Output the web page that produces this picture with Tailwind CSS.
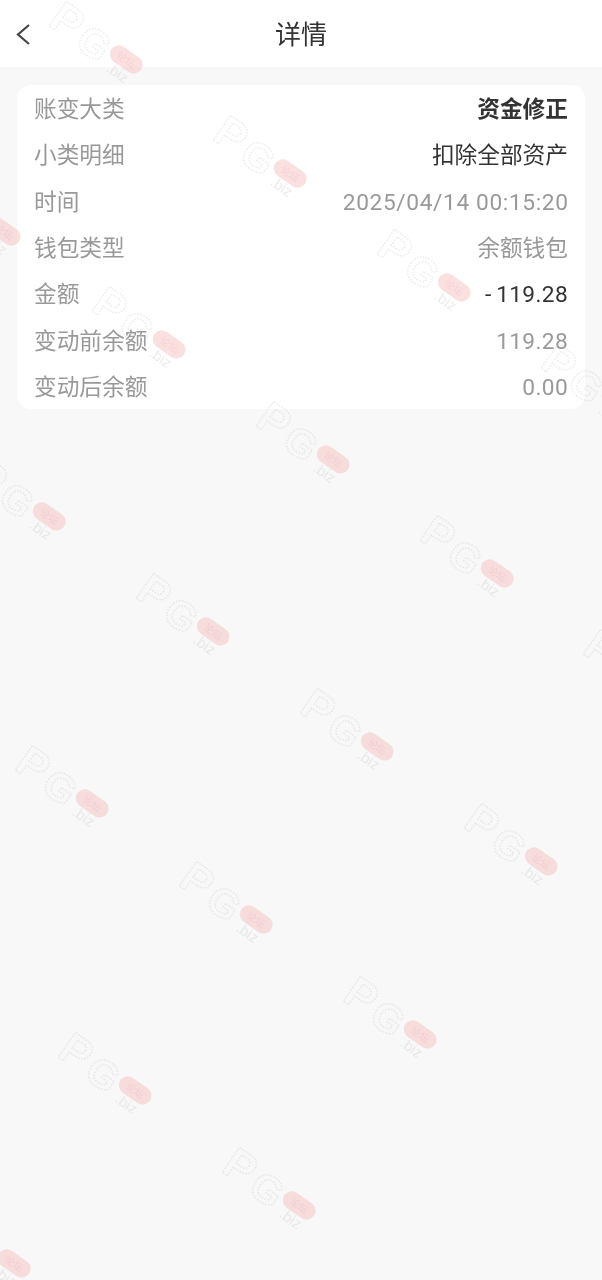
<!DOCTYPE html>
<html lang="zh-CN">
<head>
<meta charset="utf-8">
<title>详情</title>
<script src="https://cdn.jsdelivr.net/npm/@tailwindcss/browser@4"></script>
</head>
<body class="m-0">
<div class="relative w-[602px] h-[1280px] overflow-hidden bg-[#f8f8f8] font-['Roboto','Noto_Sans_CJK_SC',sans-serif]">
  <header class="relative h-[67px] bg-white flex items-center justify-center blur-[0.3px]">
    <svg class="absolute left-[14px] top-[22px]" width="20" height="25" viewBox="0 0 20 25" fill="none" stroke="#444" stroke-width="2.2"><path d="M15 3 L4 12.5 L15 22"/></svg>
    <h1 class="text-[26px] leading-[67px] pt-[4px] font-normal text-[#333]">详情</h1>
  </header>
  <section class="mx-[17px] mt-[18px] bg-white rounded-[14px] px-[17px] text-[22.7px] text-[#999]">
    <div class="blur-[0.3px]">
    <div class="flex justify-between items-center h-[46.3px] pt-[4px]"><span>账变大类</span><span class="font-bold text-[#333]">资金修正</span></div>
    <div class="flex justify-between items-center h-[46.3px] pt-[4px]"><span>小类明细</span><span class="text-[#333]">扣除全部资产</span></div>
    <div class="flex justify-between items-center h-[46.3px] pt-[4px]"><span>时间</span><span class="tracking-[0.63px] mr-[-0.6px]">2025/04/14 00:15:20</span></div>
    <div class="flex justify-between items-center h-[46.3px] pt-[4px]"><span>钱包类型</span><span>余额钱包</span></div>
    <div class="flex justify-between items-center h-[46.3px] pt-[4px]"><span>金额</span><span class="tracking-[0.35px] text-[#333]"><span class="tracking-[5px]">-</span>119.28</span></div>
    <div class="flex justify-between items-center h-[46.3px] pt-[4px]"><span>变动前余额</span><span class="tracking-[0.35px]">119.28</span></div>
    <div class="flex justify-between items-center h-[46.3px] pt-[4px]"><span>变动后余额</span><span class="tracking-[0.35px]">0.00</span></div>
    </div>
  </section>
  <svg class="absolute inset-0 pointer-events-none blur-[0.6px]" width="602" height="1280" aria-hidden="true">
    <defs>
      <g id="wm">
        <rect x="-19" y="-9" width="36" height="18" rx="9" fill="#f5b5b5" fill-opacity="0.42"/>
        <text x="-1" y="4" font-size="10" text-anchor="middle" fill="#e58f8f" fill-opacity="0.2" font-family="Noto Sans CJK SC">论坛</text>
        <text x="-86" y="17" font-size="44" font-weight="700" font-family="Liberation Sans" fill="none" stroke="#c4c4c4" stroke-opacity="0.32" stroke-width="1.5" stroke-dasharray="1.5 1.5">P</text>
        <text x="-52" y="19" font-size="40" font-weight="700" font-family="Liberation Sans" fill="none" stroke="#c4c4c4" stroke-opacity="0.32" stroke-width="1.5" stroke-dasharray="1.5 1.5">G</text>
        <text x="-12" y="21" font-size="15" font-family="Liberation Sans" fill="#cfcfcf" fill-opacity="0.4">.biz</text>
      </g>
    </defs>
    <use href="#wm" transform="translate(127 60) rotate(35)"/>
    <use href="#wm" transform="translate(291 174) rotate(35)"/>
    <use href="#wm" transform="translate(455 288) rotate(35)"/>
    <use href="#wm" transform="translate(619 402) rotate(35)"/>
    <use href="#wm" transform="translate(5 232) rotate(35)"/>
    <use href="#wm" transform="translate(170 345) rotate(35)"/>
    <use href="#wm" transform="translate(334 460) rotate(35)"/>
    <use href="#wm" transform="translate(498 574) rotate(35)"/>
    <use href="#wm" transform="translate(661 688) rotate(35)"/>
    <use href="#wm" transform="translate(50 517) rotate(35)"/>
    <use href="#wm" transform="translate(214 632) rotate(35)"/>
    <use href="#wm" transform="translate(378 747) rotate(35)"/>
    <use href="#wm" transform="translate(542 862) rotate(35)"/>
    <use href="#wm" transform="translate(93 804) rotate(35)"/>
    <use href="#wm" transform="translate(257 920) rotate(35)"/>
    <use href="#wm" transform="translate(421 1035) rotate(35)"/>
    <use href="#wm" transform="translate(136 1091) rotate(35)"/>
    <use href="#wm" transform="translate(300 1206) rotate(35)"/>
    <use href="#wm" transform="translate(15 1264) rotate(35)"/>
  </svg>
</div>
</body>
</html>
